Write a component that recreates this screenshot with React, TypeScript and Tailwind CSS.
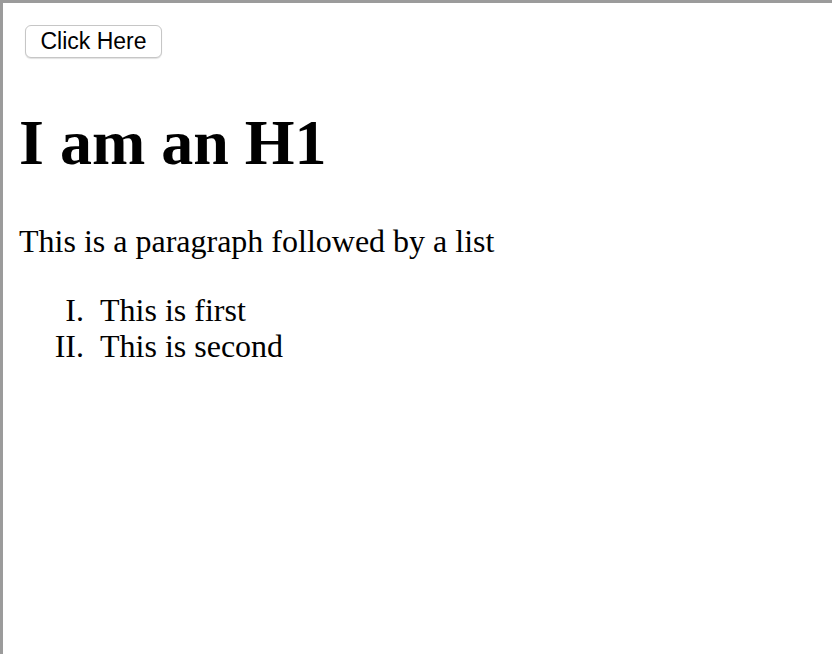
const items = [
  { marker: 'I.', text: 'This is first' },
  { marker: 'II.', text: 'This is second' },
]

export default function App() {
  return (
    <div className="min-h-screen border-t-[3px] border-l-[3px] border-[#9b9b9b] bg-white text-black font-['Liberation_Serif','Times_New_Roman',serif]">
      <div className="px-4 pt-[22px]">
        <button
          type="button"
          className="ml-[6px] flex h-[33px] w-[137px] items-center justify-center rounded-[6px] border border-[#c6c6c6] bg-white font-['Liberation_Sans',Arial,sans-serif] text-[23px] leading-none shadow-[0_1px_1px_rgba(0,0,0,0.12)]"
        >
          Click Here
        </button>
        <h1 className="mt-[48px] text-[64px] font-bold leading-[74px]">I am an H1</h1>
        <p className="mt-[43px] text-[32px] leading-[37px]">This is a paragraph followed by a list</p>
        <ol className="mt-[32px] list-none text-[32px] leading-[36px]">
          {items.map(item => (
            <li key={item.marker} className="flex">
              <span className="w-[81px] shrink-0 pr-[16px] text-right">{item.marker}</span>
              <span>{item.text}</span>
            </li>
          ))}
        </ol>
      </div>
    </div>
  )
}
